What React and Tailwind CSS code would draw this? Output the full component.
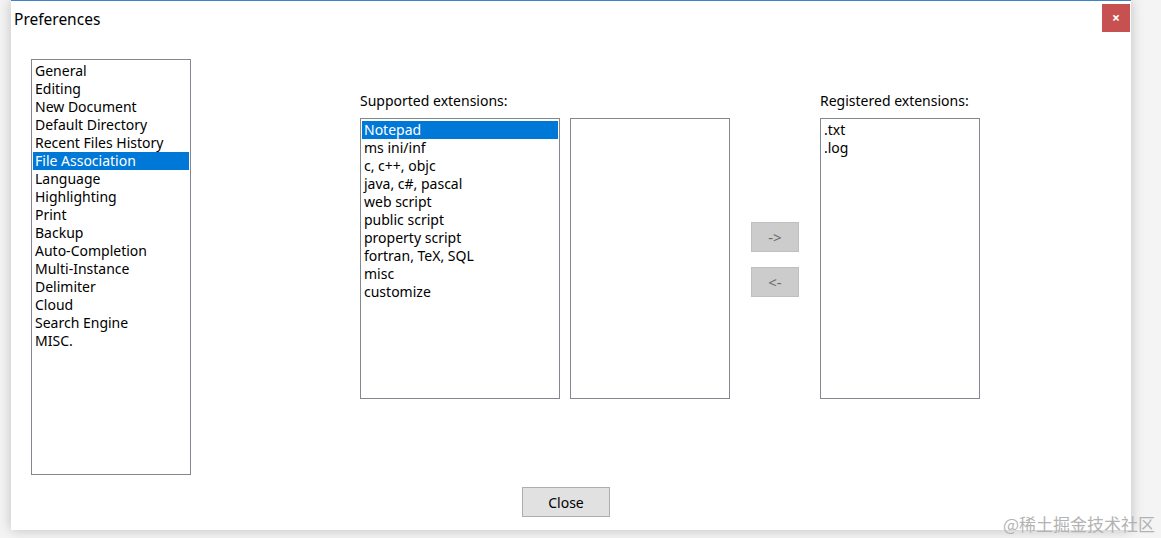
import React from "react";

const font = { fontFamily: '"Noto Sans", "Open Sans", sans-serif' };

function ListBox({ items, selected, className }) {
  return (
    <div className={`border border-[#828790] bg-white px-[1px] ${className}`}>
      {items.map((it) => (
        <div
          key={it}
          className={`h-[18px] pl-[2px] leading-[18px] text-[14px] whitespace-nowrap ${
            it === selected ? "bg-[#0078d7] text-white" : "text-black"
          }`}
        >
          {it}
        </div>
      ))}
    </div>
  );
}

export default function App() {
  const nav = [
    "General",
    "Editing",
    "New Document",
    "Default Directory",
    "Recent Files History",
    "File Association",
    "Language",
    "Highlighting",
    "Print",
    "Backup",
    "Auto-Completion",
    "Multi-Instance",
    "Delimiter",
    "Cloud",
    "Search Engine",
    "MISC.",
  ];
  const supported = [
    "Notepad",
    "ms ini/inf",
    "c, c++, objc",
    "java, c#, pascal",
    "web script",
    "public script",
    "property script",
    "fortran, TeX, SQL",
    "misc",
    "customize",
  ];
  return (
    <div
      className="relative w-[1161px] h-[538px] overflow-hidden bg-[#f4f4f4]"
      style={font}
    >
      <div className="ml-[11px] w-[1120px] h-[530px] bg-white border-t border-[#3d84c6] shadow-[0_0_12px_rgba(0,0,0,0.22)] flex flex-col">
        <div className="flex justify-between h-[36px]">
          <div className="pl-[3px] pt-[8px] text-[15.5px] leading-[20px] text-black">
            Preferences
          </div>
          <div className="mt-[3px] mr-[1px] w-[28px] h-[28px] bg-[#c75050] flex items-center justify-center text-white text-[14px] font-bold leading-none">
            ×
          </div>
        </div>
        <div className="flex pl-[20px] pt-[22px]">
          <ListBox
            items={nav}
            selected="File Association"
            className="w-[160px] h-[416px] pt-[2px]"
          />
          <div className="ml-[169px] flex flex-col">
            <div className="h-[17px] mt-[33px] mb-[9px] text-[14px] leading-[17px]">
              Supported extensions:
            </div>
            <ListBox
              items={supported}
              selected="Notepad"
              className="w-[200px] h-[281px] pt-[2px]"
            />
          </div>
          <div className="ml-[10px] mt-[59px] w-[160px] h-[281px] border border-[#828790]" />
          <div className="ml-[21px] mt-[163px] flex flex-col gap-[15px]">
            <div className="w-[48px] h-[30px] bg-[#cccccc] border border-[#bfbfbf] flex items-center justify-center text-[15px] text-[#6a6a6a]">
              -&gt;
            </div>
            <div className="w-[48px] h-[30px] bg-[#cccccc] border border-[#bfbfbf] flex items-center justify-center text-[15px] text-[#6a6a6a]">
              &lt;-
            </div>
          </div>
          <div className="ml-[21px] flex flex-col">
            <div className="h-[17px] mt-[33px] mb-[9px] text-[14px] leading-[17px]">
              Registered extensions:
            </div>
            <ListBox
              items={[".txt", ".log"]}
              className="w-[160px] h-[281px] pt-[2px]"
            />
          </div>
        </div>
        <div className="flex justify-center mt-[12px] pr-[10px]">
          <div className="w-[88px] h-[30px] bg-[#e1e1e1] border border-[#adadad] flex items-center justify-center text-[14px] text-black">
            Close
          </div>
        </div>
      </div>
      <div
        className="absolute right-[6px] bottom-[3px] text-[17px] leading-[22px] text-[#b3b3b3]"
        style={{ fontFamily: '"Noto Sans CJK SC", sans-serif' }}
      >
        @稀土掘金技术社区
      </div>
    </div>
  );
}
